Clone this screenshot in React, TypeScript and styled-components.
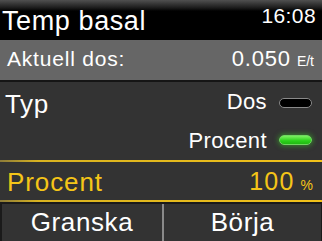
import React from 'react'
import styled, { createGlobalStyle } from 'styled-components'

const GlobalStyle = createGlobalStyle`
  html, body {
    margin: 0;
    padding: 0;
    background: #333;
  }
  * {
    box-sizing: border-box;
  }
`

const Screen = styled.div`
  width: 322px;
  height: 241px;
  display: flex;
  flex-direction: column;
  background: #333;
  font-family: 'Liberation Sans', Arial, sans-serif;
  color: #fff;
  overflow: hidden;
`
const Header = styled.div`
  height: 40px;
  display: flex;
  align-items: center;
  justify-content: space-between;
  padding: 0 6px 0 2px;
  background: linear-gradient(#505050 0, #1a1a1a 8px, #000 11px, #000 100%);
`
const Title = styled.div`
  font-size: 27px;
  letter-spacing: 0.6px;
  padding-top: 2px;
`
const Clock = styled.div`
  font-size: 21px;
  letter-spacing: 0.4px;
  margin-top: -8px;
`
const InfoBar = styled.div`
  height: 42px;
  display: flex;
  align-items: center;
  justify-content: space-between;
  padding: 0 8px 2px 7px;
  background: #666;
  border-bottom: 2px solid #151515;
`
const InfoLabel = styled.div`
  font-size: 21px;
  letter-spacing: 0.8px;
`
const Value = styled.div<{ $color?: string; $size: number }>`
  display: flex;
  align-items: baseline;
  gap: 6px;
  color: ${({ $color }) => $color || '#fff'};
  font-size: ${({ $size }) => $size}px;
  letter-spacing: ${({ $size }) => ($size > 22 ? 1.2 : 0.8)}px;
`
const Unit = styled.span`
  font-size: 14px;
  letter-spacing: 0;
`
const Options = styled.div`
  display: flex;
  flex-direction: column;
`
const OptionRow = styled.div`
  height: 39px;
  display: flex;
  align-items: center;
  justify-content: space-between;
  padding: 0 10px 0 5px;
`
const TypLabel = styled.div`
  font-size: 26px;
  letter-spacing: 0.6px;
  margin-top: 6px;
`
const Choice = styled.div`
  display: flex;
  align-items: center;
  gap: 12px;
  margin-left: auto;
`
const ChoiceText = styled.div`
  font-size: 22px;
  letter-spacing: 0.4px;
`
const Toggle = styled.div<{ $on?: boolean }>`
  width: 33px;
  height: 10px;
  border-radius: 5px;
  border: 1.5px solid ${({ $on }) => ($on ? '#6fd860' : '#8a8a8a')};
  background: ${({ $on }) => ($on ? 'linear-gradient(#7af060, #2ad21a 60%, #22b814)' : '#000')};
  box-shadow: ${({ $on }) => ($on ? '0 0 5px 1px rgba(60, 200, 40, 0.55)' : 'none')};
  margin-top: ${({ $on }) => ($on ? -2 : 3)}px;
`
const SelectedBand = styled.div`
  height: 42px;
  display: flex;
  align-items: center;
  justify-content: space-between;
  padding: 0 9px 0 7px;
  background: #333;
  border-top: 2px solid transparent;
  border-bottom: 2px solid transparent;
  border-image: linear-gradient(90deg, #8a7a3a 0, #d9b320 12%, #f2c21a 100%) 1;
`
const SelectedLabel = styled.div`
  font-size: 26px;
  letter-spacing: 0.9px;
  color: #f5c518;
  margin-top: 2px;
`
const Footer = styled.div`
  flex: 1;
  display: grid;
  grid-template-columns: 160px 1fr;
  padding: 2px 1px 0 2px;
  background: #1a1a1a;
`
const FooterButton = styled.div<{ $divider?: boolean }>`
  display: flex;
  align-items: center;
  justify-content: center;
  background: #333;
  font-size: 26px;
  letter-spacing: 0.6px;
  border-left: ${({ $divider }) => ($divider ? '2px solid #8a8a8a' : 'none')};
  padding-bottom: 1px;
`

export default function App() {
  return (
    <>
      <GlobalStyle />
      <Screen>
        <Header>
          <Title>Temp basal</Title>
          <Clock>16:08</Clock>
        </Header>
        <InfoBar>
          <InfoLabel>Aktuell dos:</InfoLabel>
          <Value $size={22}>
            0.050<Unit>E/t</Unit>
          </Value>
        </InfoBar>
        <Options>
          <OptionRow>
            <TypLabel>Typ</TypLabel>
            <Choice>
              <ChoiceText>Dos</ChoiceText>
              <Toggle />
            </Choice>
          </OptionRow>
          <OptionRow>
            <Choice>
              <ChoiceText>Procent</ChoiceText>
              <Toggle $on />
            </Choice>
          </OptionRow>
        </Options>
        <SelectedBand>
          <SelectedLabel>Procent</SelectedLabel>
          <Value $color="#f5c518" $size={25}>
            100<Unit>%</Unit>
          </Value>
        </SelectedBand>
        <Footer>
          <FooterButton>Granska</FooterButton>
          <FooterButton $divider>Börja</FooterButton>
        </Footer>
      </Screen>
    </>
  )
}
